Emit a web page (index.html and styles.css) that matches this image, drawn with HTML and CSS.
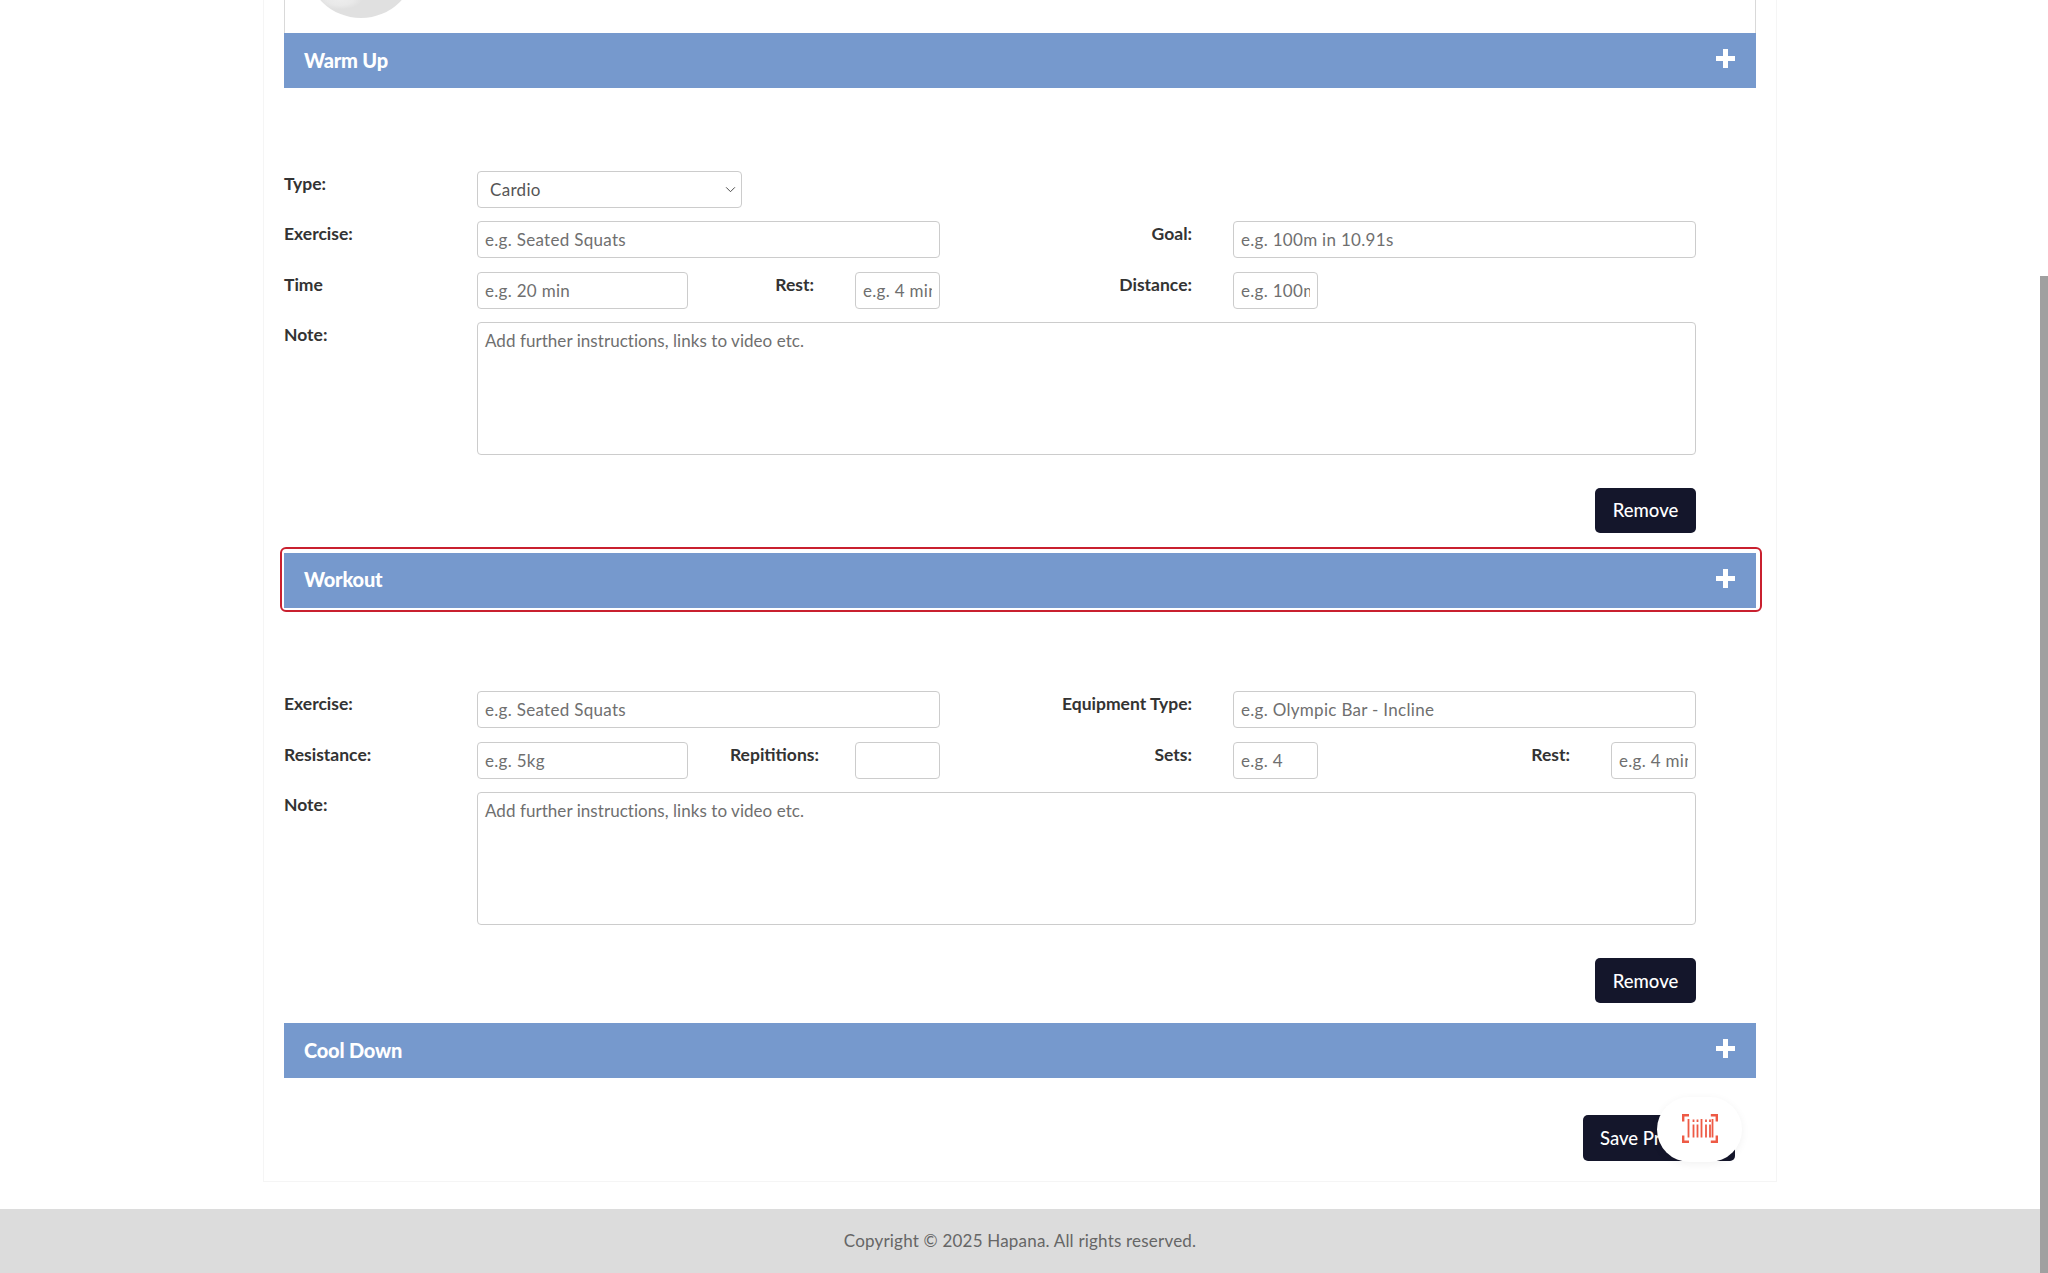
FILE: index.html
```html
<!DOCTYPE html>
<html lang="en">
<head>
<meta charset="utf-8">
<title>Program Builder</title>
<link rel="stylesheet" href="styles.css">
</head>
<body>
<div class="page">
  <main class="card">
    <div class="top-panel">
      <div class="avatar"></div>
    </div>

    <section class="section">
      <header class="bar"><h2>Warm Up</h2><svg class="plus" viewBox="0 0 19 19"><path d="M7 0h5v7h7v5h-7v7H7v-7H0V7h7z"/></svg></header>
      <div class="form">
        <div class="row">
          <label class="lbl">Type:</label>
          <div class="select-wrap">
            <select class="ctl select"><option>Cardio</option></select>
            <svg class="chev" viewBox="0 0 12 8"><path d="M1 1.500l5 5 5-5"/></svg>
          </div>
        </div>
        <div class="row">
          <label class="lbl">Exercise:</label>
          <input class="ctl w-full" placeholder="e.g. Seated Squats">
          <label class="lbl-r lbl-wide">Goal:</label>
          <input class="ctl w-full" placeholder="e.g. 100m in 10.91s">
        </div>
        <div class="row">
          <label class="lbl">Time</label>
          <input class="ctl w-mid" placeholder="e.g. 20 min">
          <label class="lbl-r lbl-rest">Rest:</label>
          <input class="ctl w-small" placeholder="e.g. 4 min">
          <label class="lbl-r lbl-wide">Distance:</label>
          <input class="ctl w-small" placeholder="e.g. 100m">
        </div>
        <div class="row">
          <label class="lbl">Note:</label>
          <textarea class="ctl note" placeholder="Add further instructions, links to video etc."></textarea>
        </div>
        <div class="actions"><button class="btn">Remove</button></div>
      </div>
    </section>

    <section class="section">
      <header class="bar focus"><h2>Workout</h2><svg class="plus" viewBox="0 0 19 19"><path d="M7 0h5v7h7v5h-7v7H7v-7H0V7h7z"/></svg></header>
      <div class="form form-lower">
        <div class="row">
          <label class="lbl">Exercise:</label>
          <input class="ctl w-full" placeholder="e.g. Seated Squats">
          <label class="lbl-r lbl-wide">Equipment Type:</label>
          <input class="ctl w-full" placeholder="e.g. Olympic Bar - Incline">
        </div>
        <div class="row">
          <label class="lbl">Resistance:</label>
          <input class="ctl w-mid" placeholder="e.g. 5kg">
          <label class="lbl-r lbl-reps">Repititions:</label>
          <input class="ctl w-small">
          <label class="lbl-r lbl-wide">Sets:</label>
          <input class="ctl w-small" placeholder="e.g. 4">
          <label class="lbl-r lbl-wide">Rest:</label>
          <input class="ctl w-small" placeholder="e.g. 4 min">
        </div>
        <div class="row">
          <label class="lbl">Note:</label>
          <textarea class="ctl note" placeholder="Add further instructions, links to video etc."></textarea>
        </div>
        <div class="actions"><button class="btn">Remove</button></div>
      </div>
    </section>

    <section class="section">
      <header class="bar"><h2>Cool Down</h2><svg class="plus" viewBox="0 0 19 19"><path d="M7 0h5v7h7v5h-7v7H7v-7H0V7h7z"/></svg></header>
    </section>

    <div class="save-row"><button class="btn btn-save">Save Program</button></div>
  </main>
  <footer class="footer">Copyright © 2025 Hapana. All rights reserved.</footer>
</div>

<div class="scan">
  <svg viewBox="0 0 36 29" fill="none" stroke="#ee5a45">
    <path stroke-width="2.400" d="M7 1.200H1.200v6.300M28.800 1.200h6v6.300M7 27.800H1.200v-6.300M28.800 27.800h6v-6.300"/>
    <path stroke-width="1.800" d="M6.500 5v18.500M11.500 10.500v13M15.500 10.500v13M19.500 5v18.500M24 10.500v13M28 10.500v13M30.500 5v18.500"/>
    <path stroke-width="1.800" d="M11.500 5.500v2.600M15.500 5.500v2.600M24 5.500v2.600M28 5.500v2.600"/>
  </svg>
</div>
<div class="scrollthumb"></div>
</body>
</html>
```
FILE: styles.css
```css
* { box-sizing: border-box; }
html, body { margin: 0; height: 100%; overflow: hidden; background: #fff; }
body { font-family: Lato, "Noto Sans", sans-serif; color: #333; font-size: 16px; }
.page { display: flex; flex-direction: column; height: 1273px; }

.card {
  width: 1514px;
  height: 1182px;
  margin: 0 0 27px 263px;
  padding: 0 20px;
  border: 1px solid #f5f5f5;
  border-top: 0;
  flex: none;
}
.top-panel {
  height: 33px;
  overflow: hidden;
  border: 1px solid #d9d9d9;
  border-top: 0;
  border-bottom: 0;
}
.avatar {
  width: 110px;
  height: 110px;
  margin: -92px 0 0 21px;
  border-radius: 50%;
  background: radial-gradient(ellipse 22px 10px at 31% 83%, #ededed 0, #e9e9e9 60%, #e0e0e0 100%), #e0e0e0;
}
.bar {
  position: relative;
  height: 55px;
  background: #7699cd;
  display: flex;
  align-items: center;
  justify-content: space-between;
  padding: 0 21px 2px 20px;
  color: #fff;
}
.bar h2 { margin: 0; font-size: 20px; font-weight: 900; letter-spacing: -.2px; }
.plus { width: 19px; height: 19px; fill: #fff; margin-top: -2px; }
.focus::after {
  content: "";
  position: absolute;
  inset: -5.500px -6px -4px -4px;
  border: 2.500px solid #c9202f;
  border-radius: 6px;
}

.form { padding: 83px 0 20px; display: flex; flex-direction: column; gap: 13.500px; }
.form-lower { padding-top: 83.500px; }
.row { display: flex; align-items: flex-start; }
.lbl { width: 193px; flex: none; font-weight: 700; font-size: 17.500px; line-height: 25px; }
.lbl-r { flex: none; font-weight: 700; font-size: 17.500px; text-align: right; line-height: 25px; white-space: nowrap; }
.lbl-wide { width: 252px; margin-right: 41px; }
.lbl-rest { width: 126px; margin-right: 41px; }
.lbl-reps { width: 131px; margin-right: 36px; }

.ctl {
  height: 37px;
  border: 1px solid #ccc;
  border-radius: 4px;
  background: #fff;
  font: 17px Lato, "Noto Sans", sans-serif;
  letter-spacing: .3px;
  color: #555;
  padding: 0 7px;
  flex: none;
}
.ctl::placeholder { color: #6f6f6f; opacity: 1; }
.w-full { width: 463px; }
.w-mid { width: 211px; }
.w-small { width: 85px; }
.note { width: 1219px; height: 133px; padding: 7px; resize: none; letter-spacing: .05px; }
.select-wrap { position: relative; width: 265px; height: 36.500px; }
.select { width: 265px; height: 36.500px; appearance: none; padding: 0 12px; }
.chev { position: absolute; right: 6px; top: 15px; width: 11px; height: 7px; fill: none; stroke: #444; stroke-width: 1.100; }

.actions { display: flex; justify-content: flex-end; padding: 19px 60px 0 0; }
.form-lower .actions { padding-top: 19.500px; }
.btn {
  height: 45px;
  width: 101px;
  padding: 0;
  border: 0;
  border-radius: 5px;
  background: #14162b;
  color: #fff;
  font: 500 18.500px Lato, "Noto Sans", sans-serif;
}
.save-row { display: flex; justify-content: flex-end; padding: 37px 21px 0 0; }
.btn-save { width: 152px; height: 46px; padding: 0 0 0 17px; text-align: left; }

.footer {
  height: 64px;
  padding-right: 8px;
  background: #dcdcdc;
  text-align: center;
  line-height: 64px;
  color: #666;
  font-size: 17px;
  letter-spacing: .2px;
  flex: none;
}
.scan {
  position: fixed;
  left: 1657px;
  top: 1097px;
  width: 85px;
  height: 65px;
  border-radius: 33px;
  background: #fff;
  box-shadow: 0 2px 8px rgba(0,0,0,.06);
  display: flex;
  align-items: center;
  justify-content: center;
}
.scan svg { width: 36px; height: 29px; margin-top: -3px; }
.scrollthumb { position: fixed; right: 0; top: 276px; width: 8px; bottom: 0; background: #a0a0a0; }
```
